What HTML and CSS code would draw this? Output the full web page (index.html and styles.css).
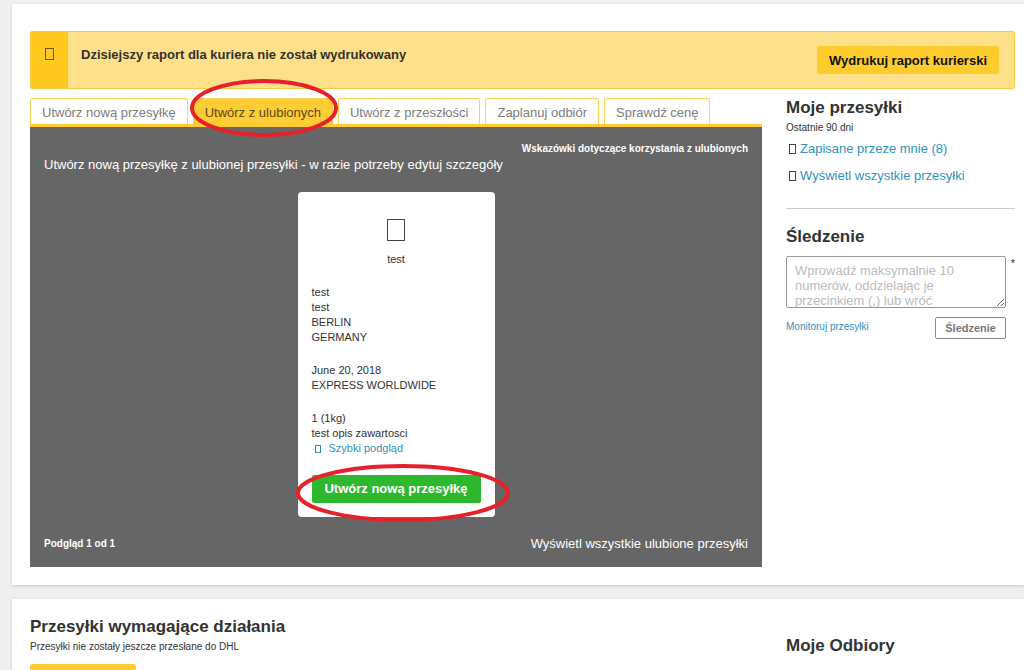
FILE: index.html
```html
<!DOCTYPE html>
<html lang="pl">
<head>
<meta charset="utf-8">
<title>Moje przesyłki</title>
<link rel="stylesheet" href="styles.css">
</head>
<body>
<main class="page">
  <section class="panel">
    <div class="alert">
      <div class="alert-mark"><span class="glyph glyph-alert"></span></div>
      <p class="alert-text">Dzisiejszy raport dla kuriera nie został wydrukowany</p>
      <button class="btn btn-report" type="button">Wydrukuj raport kurierski</button>
    </div>
    <div class="columns">
      <div class="content">
        <nav class="tabs">
          <a class="tab" href="#new">Utwórz nową przesyłkę</a>
          <a class="tab tab-active" href="#favorites">Utwórz z ulubionych
            <svg class="ring ring-tab" viewBox="0 0 148 58"><ellipse cx="74" cy="29" rx="72" ry="27"/></svg>
          </a>
          <a class="tab" href="#past">Utwórz z przeszłości</a>
          <a class="tab" href="#pickup">Zaplanuj odbiór</a>
          <a class="tab" href="#price">Sprawdź cenę</a>
        </nav>
        <div class="favorites">
          <a class="hint" href="#hints">Wskazówki dotyczące korzystania z ulubionych</a>
          <p class="intro">Utwórz nową przesyłkę z ulubionej przesyłki - w razie potrzeby edytuj szczegóły</p>
          <article class="card">
            <div class="card-head">
              <span class="glyph glyph-card"></span>
              <div class="card-name">test</div>
            </div>
            <p class="card-lines">test<br>test<br>BERLIN<br>GERMANY</p>
            <p class="card-lines">June 20, 2018<br>EXPRESS WORLDWIDE</p>
            <p class="card-lines">1 (1kg)<br>test opis zawartosci<br><a class="link quick" href="#preview"><span class="glyph glyph-quick"></span>Szybki podgląd</a></p>
            <div class="card-action">
              <button class="btn btn-create" type="button">Utwórz nową przesyłkę</button>
              <svg class="ring ring-button" viewBox="0 0 214 58"><ellipse cx="107" cy="29" rx="105" ry="27"/></svg>
            </div>
          </article>
          <div class="favorites-foot">
            <span class="count">Podgląd 1 od 1</span>
            <a class="all" href="#all-favorites">Wyświetl wszystkie ulubione przesyłki</a>
          </div>
        </div>
      </div>
      <aside class="side">
        <h2 class="heading">Moje przesyłki</h2>
        <p class="note">Ostatnie 90 dni</p>
        <ul class="links">
          <li><span class="glyph glyph-link"></span><a class="link" href="#saved">Zapisane przeze mnie (8)</a></li>
          <li><span class="glyph glyph-link"></span><a class="link" href="#all">Wyświetl wszystkie przesyłki</a></li>
        </ul>
        <form class="tracking">
          <h2 class="heading"><label for="numbers">Śledzenie</label></h2>
          <div class="field">
            <textarea class="numbers" id="numbers" placeholder="Wprowadź maksymalnie 10 numerów, oddzielając je przecinkiem (,) lub wróć"></textarea>
            <span class="required">*</span>
          </div>
          <div class="tracking-foot">
            <a class="link monitor" href="#monitor">Monitoruj przesyłki</a>
            <button class="btn btn-track" type="button">Śledzenie</button>
          </div>
        </form>
      </aside>
    </div>
  </section>
  <section class="panel panel-next">
    <div>
      <h2 class="heading">Przesyłki wymagające działania</h2>
      <p class="note">Przesyłki nie zostały jeszcze przesłane do DHL</p>
      <div class="chip"></div>
    </div>
    <h2 class="heading pickups">Moje Odbiory</h2>
  </section>
</main>
</body>
</html>
```

FILE: styles.css
```css
* { box-sizing: border-box; }
body {
  margin: 0;
  height: 100vh;
  overflow: hidden;
  background: #efefef;
  color: #323232;
  font: 11px/15px "Liberation Sans", Arial, sans-serif;
}
p, h2, ul { margin: 0; padding: 0; }
a { color: inherit; text-decoration: none; }
.link { color: #3291bd; }

.page {
  display: flex;
  flex-direction: column;
  gap: 14px;
  padding: 4px 0 0 12px;
}
.panel {
  padding: 27px 9px 18px 18px;
  background: #fff;
  box-shadow: 0 1px 3px rgba(0, 0, 0, 0.16);
}

.glyph {
  display: inline-block;
  flex: none;
  border: 1px solid #444;
}
.glyph-alert { width: 9px; height: 12px; border-color: #6b5410; }
.glyph-card { width: 18px; height: 22px; }
.glyph-quick { width: 6px; height: 8px; margin: 0 8px 0 3px; border-color: #3291bd; }
.glyph-link { width: 7px; height: 10px; margin: 0 4px 0 3px; }

.btn {
  border: 0;
  border-radius: 2px;
  font: bold 13px/16px "Liberation Sans", Arial, sans-serif;
  white-space: nowrap;
}

.alert {
  display: flex;
  align-items: stretch;
  min-height: 58px;
  border: 1px solid #f5cb45;
  border-radius: 2px;
  background: #ffe08a;
}
.alert-mark {
  display: flex;
  justify-content: center;
  width: 37px;
  padding-top: 16px;
  background: #ffc91f;
}
.alert-text {
  flex: 1;
  padding: 15px 13px;
  font-size: 13px;
  line-height: 16px;
  font-weight: bold;
}
.btn-report {
  align-self: center;
  margin-right: 15px;
  padding: 7px 12px 5px;
  background: #ffcc2e;
  color: #111;
}

.columns {
  display: grid;
  grid-template-columns: minmax(0, 1fr) 229px;
  gap: 24px;
  padding-top: 9px;
}

.tabs {
  display: flex;
  gap: 5px;
  border-bottom: 3px solid #fc3;
}
.tab {
  position: relative;
  padding: 6px 11px 3px;
  border: 1px solid #fbd257;
  border-bottom: 0;
  border-radius: 3px 3px 0 0;
  color: #7d7d7d;
  font-size: 13px;
  line-height: 16px;
  white-space: nowrap;
}
.tab-active { background: #fc3; color: #5a4a1c; }

.ring {
  position: absolute;
  z-index: 1;
  overflow: visible;
  fill: none;
  stroke: #e8202a;
  stroke-width: 4;
  pointer-events: none;
}
.ring-tab { left: -4px; top: -20px; width: 148px; height: 58px; }
.ring-button { left: -16px; top: -11px; width: 214px; height: 58px; }

.favorites {
  display: flex;
  flex-direction: column;
  padding: 15px 14px 13px;
  background: #666;
  color: #fff;
}
.hint { align-self: flex-end; font-size: 10px; line-height: 14px; font-weight: bold; }
.intro { font-size: 13px; line-height: 18px; }
.card {
  align-self: center;
  width: 197px;
  margin-top: 18px;
  padding: 27px 14px 14px;
  border-radius: 4px;
  background: #fff;
  color: #323232;
}
.card-head { text-align: center; }
.glyph-card { display: block; margin: 0 auto 11px; }
.card-lines { margin-top: 18px; }
.quick { display: inline-flex; align-items: center; }
.card-action { position: relative; margin-top: 18px; }
.btn-create {
  width: 100%;
  padding: 6px 0;
  background: #2eb82e;
  color: #fff;
}
.favorites-foot {
  display: flex;
  justify-content: space-between;
  align-items: center;
  margin-top: 17px;
}
.count { font-size: 10px; font-weight: bold; }
.all { font-size: 13px; line-height: 20px; }

.heading { font-size: 17px; line-height: 20px; font-weight: bold; }
.note { font-size: 10px; line-height: 20px; }
.links { padding-top: 3px; list-style: none; font-size: 13px; line-height: 16px; }
.links li { display: flex; align-items: center; padding-bottom: 11px; }
.tracking { margin-top: 13px; padding-top: 18px; border-top: 1px solid #ccc; }
.field { display: flex; justify-content: space-between; margin-top: 9px; }
.numbers {
  display: block;
  width: 220px;
  height: 52px;
  padding: 6px 8px;
  border: 1px solid #999;
  border-radius: 2px;
  overflow: hidden;
  font: 13px/15px "Liberation Sans", Arial, sans-serif;
}
.numbers::placeholder { color: #bbb; }
.tracking-foot {
  display: flex;
  justify-content: space-between;
  align-items: flex-start;
  margin: 9px 9px 0 0;
}
.monitor { font-size: 10px; line-height: 20px; }
.btn-track {
  padding: 2px 9px;
  border: 1px solid #888;
  background: #fff;
  color: #777;
  font-size: 11px;
}

.panel-next {
  display: grid;
  grid-template-columns: minmax(0, 1fr) 229px;
  gap: 24px;
  padding-top: 18px;
}
.pickups { padding-top: 19px; }
.chip { width: 106px; height: 28px; margin-top: 7px; border-radius: 3px; background: #fc3; }
```
